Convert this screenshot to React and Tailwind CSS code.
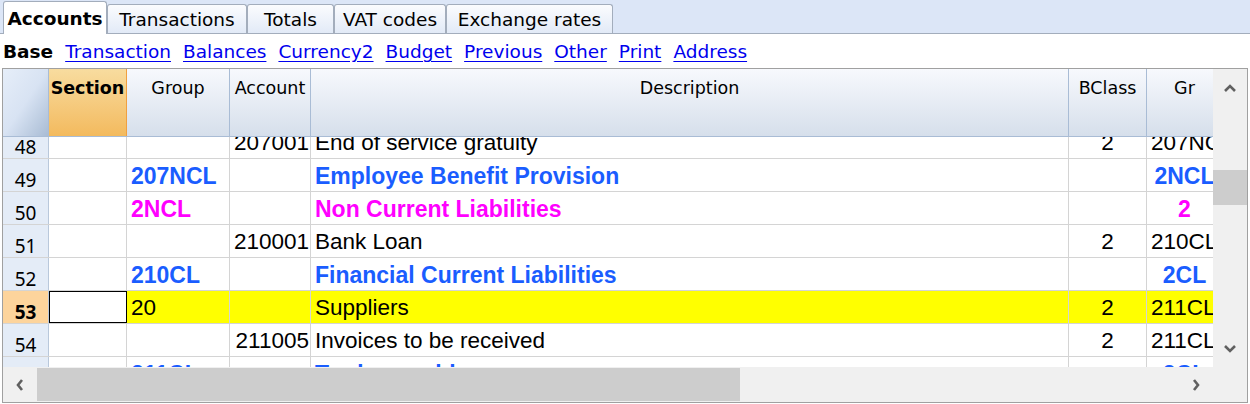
import React from "react";

const tabs = [
  { label: "Accounts", w: "w-[104px]", active: true },
  { label: "Transactions", w: "w-[140px]" },
  { label: "Totals", w: "w-[87px]" },
  { label: "VAT codes", w: "w-[112px]" },
  { label: "Exchange rates", w: "w-[167px]" },
];

const views = ["Transaction", "Balances", "Currency2", "Budget", "Previous", "Other", "Print", "Address"];

const rows = [
  { n: 48, account: "207001", desc: "End of service gratuity", bclass: "2", gr: "207NCL" },
  { n: 49, group: "207NCL", desc: "Employee Benefit Provision", gr: "2NCL", tone: "blue" },
  { n: 50, group: "2NCL", desc: "Non Current Liabilities", gr: "2", tone: "pink" },
  { n: 51, account: "210001", desc: "Bank Loan", bclass: "2", gr: "210CL" },
  { n: 52, group: "210CL", desc: "Financial Current Liabilities", gr: "2CL", tone: "blue" },
  { n: 53, group: "20", desc: "Suppliers", bclass: "2", gr: "211CL", selected: true },
  { n: 54, account: "211005", desc: "Invoices to be received", bclass: "2", gr: "211CL" },
  { n: 55, group: "211CL", desc: "Trade payables", gr: "2CL", tone: "blue" },
];

const Chevron = ({ dir }) => {
  const pts = {
    up: "3,11 8,6 13,11",
    down: "3,6 8,11 13,6",
    left: "10,3 6,8 10,13",
    right: "6,3 10,8 6,13",
  }[dir];
  return (
    <svg width="16" height="16" viewBox="0 0 16 16">
      <polyline points={pts} fill="none" stroke="#606060" strokeWidth="2.6" />
    </svg>
  );
};

const Row = ({ r }) => {
  const tone =
    r.tone === "blue"
      ? "text-[#1a5dff] font-bold text-[23px]"
      : r.tone === "pink"
      ? "text-[#ff00ff] font-bold text-[23px]"
      : "text-black";
  const fill = r.selected ? "bg-[#ffff00]" : "bg-white";
  const cell = `h-full shrink-0 border-r border-[#d4d4d4] flex items-center pt-[2px] overflow-hidden whitespace-nowrap ${fill}`;

  return (
    <div className="flex h-[33px] border-b border-[#d4d4d4] font-['Liberation_Sans',Arial,sans-serif] text-[22.5px]">
      <div
        className={`w-[46px] h-full shrink-0 border-r border-[#b9c8db] flex items-center justify-center pt-[10px] leading-none font-['Noto_Sans',sans-serif] text-[19px] ${
          r.selected ? "bg-[#fdd49c] font-bold" : "bg-[#e4ecf7]"
        }`}
      >
        {r.n}
      </div>
      <div
        className={`w-[78px] h-full shrink-0 border-r border-[#d4d4d4] ${
          r.selected ? "bg-white border border-black" : "bg-white"
        }`}
      />
      <div className={`${cell} w-[103px] pl-[4px] ${tone}`}>{r.group}</div>
      <div className={`${cell} w-[81px] justify-end pr-[1px]`}>{r.account}</div>
      <div className={`${cell} w-[758px] pl-[4px] ${tone}`}>{r.desc}</div>
      <div className={`${cell} w-[78px] justify-center`}>{r.bclass}</div>
      <div className={`${cell} w-[76px] ${r.tone ? "justify-center" : "pl-[4px]"} ${tone}`}>{r.gr}</div>
    </div>
  );
};

const HeaderCell = ({ w, children, section }) => (
  <div
    className={`${w} h-full shrink-0 border-r pt-[6px] text-center whitespace-nowrap overflow-hidden ${
      section
        ? "bg-linear-to-b from-[#f8dc9f] to-[#f3ba5d] border-[#f0a040] font-bold"
        : "bg-linear-to-b from-[#f7f9fd] to-[#d6dfeb] border-[#a9bcd5]"
    }`}
  >
    {children}
  </div>
);

export default function App() {
  return (
    <div className="w-[1250px] h-[404px] bg-white overflow-hidden text-black font-['DejaVu_Sans',sans-serif]">
      {/* tabs */}
      <div className="h-[34px] flex items-end pl-[3px] bg-[#dce6f7] border-b border-[#a3adbc] text-[18.5px]">
        {tabs.map((t) =>
          t.active ? (
            <div
              key={t.label}
              className={`${t.w} h-[33px] -mb-px bg-white border border-b-0 border-[#a3adbc] rounded-t-[3px] flex items-center justify-center pt-[2px] font-bold`}
            >
              {t.label}
            </div>
          ) : (
            <div
              key={t.label}
              className={`${t.w} h-[29px] border border-b-0 border-[#a3adbc] rounded-t-[3px] bg-linear-to-b from-[#fbfcfe] to-[#e2eaf7] flex items-center justify-center pt-[1px]`}
            >
              {t.label}
            </div>
          )
        )}
      </div>

      {/* view links */}
      <div className="h-[34px] flex items-center gap-[12px] pl-[3px] text-[18.5px] pt-[2px]">
        <span className="font-bold">Base</span>
        {views.map((v) => (
          <a key={v} className="text-[#0000ee] underline underline-offset-[3px]">
            {v}
          </a>
        ))}
      </div>

      {/* grid */}
      <div className="ml-[2px] w-[1246px] h-[335px] border border-[#a0a0a0] flex flex-col">
        <div className="flex h-[298px]">
          <div className="w-[1210px] h-full overflow-hidden flex flex-col">
            <div className="flex h-[68px] shrink-0 border-b border-[#a9bcd5] text-[17.5px]">
              <div className="w-[46px] h-full shrink-0 border-r border-[#a9bcd5] bg-linear-to-br from-[#e6eef9] via-[#d8e3f3] to-[#a9bcd4]" />
              <HeaderCell w="w-[78px]" section>
                Section
              </HeaderCell>
              <HeaderCell w="w-[103px]">Group</HeaderCell>
              <HeaderCell w="w-[81px]">Account</HeaderCell>
              <HeaderCell w="w-[758px]">Description</HeaderCell>
              <HeaderCell w="w-[78px]">BClass</HeaderCell>
              <HeaderCell w="w-[76px]">Gr</HeaderCell>
            </div>
            <div className="flex-1 overflow-hidden">
              <div className="-mt-[11px]">
                {rows.map((r) => (
                  <Row key={r.n} r={r} />
                ))}
              </div>
            </div>
          </div>
          {/* vertical scrollbar */}
          <div className="flex-1 h-full bg-[#f0f0f0] flex flex-col items-center">
            <div className="h-[38px] flex items-center justify-center">
              <Chevron dir="up" />
            </div>
            <div className="h-[63px]" />
            <div className="w-full h-[35px] bg-[#cdcdcd]" />
            <div className="flex-1" />
            <div className="h-[38px] flex items-center justify-center">
              <Chevron dir="down" />
            </div>
          </div>
        </div>
        {/* horizontal scrollbar */}
        <div className="flex-1 flex bg-[#f0f0f0]">
          <div className="w-[1210px] flex items-center py-[1px]">
            <div className="w-[34px] h-full flex items-center justify-center">
              <Chevron dir="left" />
            </div>
            <div className="w-[703px] h-full bg-[#cdcdcd]" />
            <div className="flex-1" />
            <div className="w-[34px] h-full flex items-center justify-center">
              <Chevron dir="right" />
            </div>
          </div>
          <div className="flex-1" />
        </div>
      </div>
    </div>
  );
}
